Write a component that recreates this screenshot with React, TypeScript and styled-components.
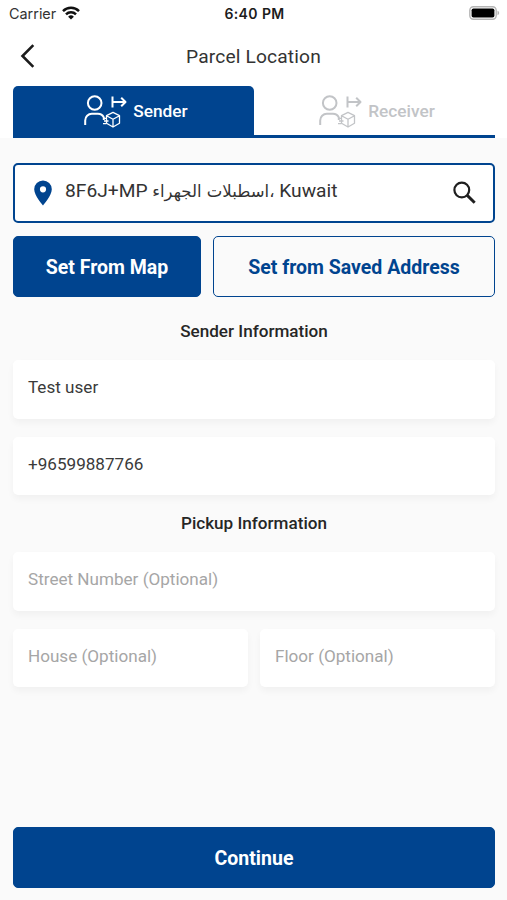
import React from "react";
import styled, { createGlobalStyle } from "styled-components";

const BLUE = "#00448f";

const GlobalStyle = createGlobalStyle`
  *, *::before, *::after { box-sizing: border-box; }
  body { margin: 0; background: #fafafa; font-family: Roboto, "DejaVu Sans", sans-serif; color: #262626; }
  button { font-family: inherit; padding: 0; }
`;

const Screen = styled.div`
  width: 507px;
  height: 900px;
  display: flex;
  flex-direction: column;
  background: #fafafa;
`;

const Top = styled.header`
  background: #fff;
  height: 138px;
  display: flex;
  flex-direction: column;
`;

const StatusBar = styled.div`
  height: 28px;
  display: grid;
  grid-template-columns: 1fr auto 1fr;
  align-items: center;
  padding: 0 7px 0 9px;
  font-family: Inter, sans-serif;
`;

const Carrier = styled.div`
  display: flex;
  align-items: center;
  gap: 6px;
  font-size: 14.4px;
  color: #333;
  line-height: 28px;
  svg { margin-top: -2px; }
`;

const Clock = styled.div`
  font-size: 14px;
  font-weight: 600;
  letter-spacing: 0.4px;
  padding-bottom: 2px;
  color: #1c1c1c;
`;

const Battery = styled.svg`
  justify-self: end;
  display: block;
  margin-top: -2px;
`;

const NavBar = styled.div`
  height: 58px;
  display: grid;
  grid-template-columns: 60px 1fr 60px;
  align-items: center;
  padding-bottom: 2px;
`;

const BackButton = styled.button`
  border: 0;
  background: none;
  height: 32px;
  width: 32px;
  margin-left: 12px;
  svg { display: block; }
`;

const Title = styled.h1`
  margin: 0;
  text-align: center;
  font-size: 19.2px;
  font-weight: 400;
  letter-spacing: 0.15px;
  color: #333;
`;

const Tabs = styled.div`
  display: grid;
  grid-template-columns: 1fr 1fr;
  height: 52px;
  margin: 0 12px 0 13px;
  border-bottom: 3px solid ${BLUE};
`;

const Tab = styled.button<{ $active?: boolean }>`
  border: 0;
  border-radius: 5px 5px 0 0;
  background: ${(p) => (p.$active ? BLUE : "transparent")};
  color: ${(p) => (p.$active ? "#fff" : "#c2c4c7")};
  display: flex;
  align-items: center;
  justify-content: center;
  gap: 6px;
  padding-left: 5px;
  font-size: 17.3px;
  font-weight: 500;
`;

const Content = styled.main`
  flex: 1;
  display: flex;
  flex-direction: column;
  padding: 25px 12px 12px 13px;
`;

const AddressBar = styled.div`
  height: 60px;
  flex: none;
  border: 2px solid ${BLUE};
  border-radius: 5px;
  background: #fff;
  display: flex;
  align-items: center;
  padding: 0 16px 0 18px;
  svg { flex: none; display: block; }
`;

const Address = styled.span`
  flex: 1;
  margin-left: 12px;
  padding-bottom: 3px;
  font-size: 19.2px;
  line-height: 24px;
  color: #333;
  white-space: nowrap;
`;

const AddressArabic = styled.span`
  font-family: "DejaVu Sans", sans-serif;
  font-size: 16.5px;
`;

const Actions = styled.div`
  display: grid;
  grid-template-columns: 188px 1fr;
  gap: 12px;
  margin-top: 13px;
`;

const Button = styled.button<{ $outline?: boolean }>`
  height: 61px;
  flex: none;
  border-radius: 5px;
  border: 1px solid ${BLUE};
  background: ${(p) => (p.$outline ? "transparent" : BLUE)};
  color: ${(p) => (p.$outline ? BLUE : "#fff")};
  font-size: 19.5px;
  font-weight: 700;
  padding-top: 1px;
`;

const SectionTitle = styled.h2<{ $height: number }>`
  margin: 0;
  height: ${(p) => p.$height}px;
  padding-bottom: 22px;
  display: flex;
  align-items: flex-end;
  justify-content: center;
  font-size: 17.1px;
  line-height: 14px;
  font-weight: 500;
  color: #262626;
`;

const Fields = styled.div`
  display: grid;
  grid-template-columns: 1fr 1fr;
  gap: 18px 12px;
`;

const Field = styled.div<{ $half?: boolean; $placeholder?: boolean }>`
  grid-column: ${(p) => (p.$half ? "auto" : "1 / -1")};
  height: 58.5px;
  padding: 0 15px 4px;
  display: flex;
  align-items: center;
  border-radius: 5px;
  background: #fff;
  box-shadow: 0 4px 7px rgba(0, 0, 0, 0.04);
  color: ${(p) => (p.$placeholder ? "#a6a6a6" : "#3a3a3a")};
  font-size: 17.1px;
`;

const Spacer = styled.div`
  flex: 1;
`;

const WifiIcon = () => (
  <svg width="18" height="14" viewBox="0 0 18 14" fill="none" stroke="#111" strokeWidth="2.5">
    <path d="M1 5.1a11.4 11.4 0 0 1 16 0" />
    <path d="M4 8.3a7.1 7.1 0 0 1 10 0" />
    <path d="M9 13.6 6.1 10.7a4.2 4.2 0 0 1 5.8 0Z" fill="#111" stroke="none" />
  </svg>
);

const ParcelPersonIcon = () => (
  <svg width="43" height="34" viewBox="0 0 43 34" fill="none" stroke="currentColor" strokeLinejoin="round">
    <circle cx="10.7" cy="9" r="6.8" strokeWidth="2" />
    <path d="M1.2 31v-4.600a6.600 6.600 0 0 1 6.600-6.600h6a6.600 6.600 0 0 1 6 3.600V26" strokeWidth="2" />
    <path d="M28.500 2.500v11M29 8h12.400M37.200 3.800 41.500 8l-4.300 4.200" strokeWidth="2" />
    <path d="m29 18.400 6.500 3.300v7.600L29 33l-6.500-3.700v-7.600ZM22.500 21.700 29 25.200l6.500-3.500M29 25.200V33" strokeWidth="1.300" />
    <path d="M19 24.300h4M20 27h4.500M19 29.700h3.500" strokeWidth="1.300" />
  </svg>
);

export default function App() {
  return (
    <>
      <GlobalStyle />
      <Screen>
        <Top>
          <StatusBar>
            <Carrier>
              Carrier
              <WifiIcon />
            </Carrier>
            <Clock>6:40 PM</Clock>
            <Battery width="31" height="14" viewBox="0 0 31 14">
              <rect x="0.8" y="0.8" width="26.4" height="12.4" rx="3.6" fill="#fff" stroke="#b5b5b5" strokeWidth="1.4" />
              <rect x="2.6" y="2.5" width="22.8" height="9" rx="1.8" fill="#000" />
              <path d="M28.5 4.8c2.2.7 2.2 3.7 0 4.4z" fill="#b5b5b5" />
            </Battery>
          </StatusBar>
          <NavBar>
            <BackButton aria-label="Back">
              <svg width="32" height="32" viewBox="0 0 32 32" fill="none" stroke="#1c1c1c" strokeWidth="2.6">
                <path d="M21.3 5.2 10.5 16l10.8 10.8" />
              </svg>
            </BackButton>
            <Title>Parcel Location</Title>
          </NavBar>
          <Tabs>
            <Tab $active>
              <ParcelPersonIcon />
              Sender
            </Tab>
            <Tab>
              <ParcelPersonIcon />
              Receiver
            </Tab>
          </Tabs>
        </Top>
        <Content>
          <AddressBar>
            <svg width="20" height="26" viewBox="0 0 20 26">
              <path fillRule="evenodd" fill={BLUE} d="M10 .5a8.800 8.800 0 0 0-8.800 8.800C1.200 15.800 10 25.500 10 25.500s8.800-9.700 8.800-16.200A8.800 8.800 0 0 0 10 .5Zm0 5.700a3.100 3.100 0 1 1 0 6.200 3.100 3.100 0 0 1 0-6.200Z" />
            </svg>
            <Address>
              8F6J+MP <AddressArabic>اسطبلات الجهراء،</AddressArabic> Kuwait
            </Address>
            <svg width="24" height="24" viewBox="0 0 24 24" fill="none" stroke="#1f1f1f">
              <circle cx="8.800" cy="9" r="7.400" strokeWidth="2.200" />
              <path d="m14 14.100 7.700 7.700" strokeWidth="2.900" />
            </svg>
          </AddressBar>
          <Actions>
            <Button>Set From Map</Button>
            <Button $outline>Set from Saved Address</Button>
          </Actions>
          <SectionTitle $height={63}>Sender Information</SectionTitle>
          <Fields>
            <Field>Test user</Field>
            <Field>+96599887766</Field>
          </Fields>
          <SectionTitle $height={57}>Pickup Information</SectionTitle>
          <Fields>
            <Field $placeholder>Street Number (Optional)</Field>
            <Field $placeholder $half>House (Optional)</Field>
            <Field $placeholder $half>Floor (Optional)</Field>
          </Fields>
          <Spacer />
          <Button>Continue</Button>
        </Content>
      </Screen>
    </>
  );
}
